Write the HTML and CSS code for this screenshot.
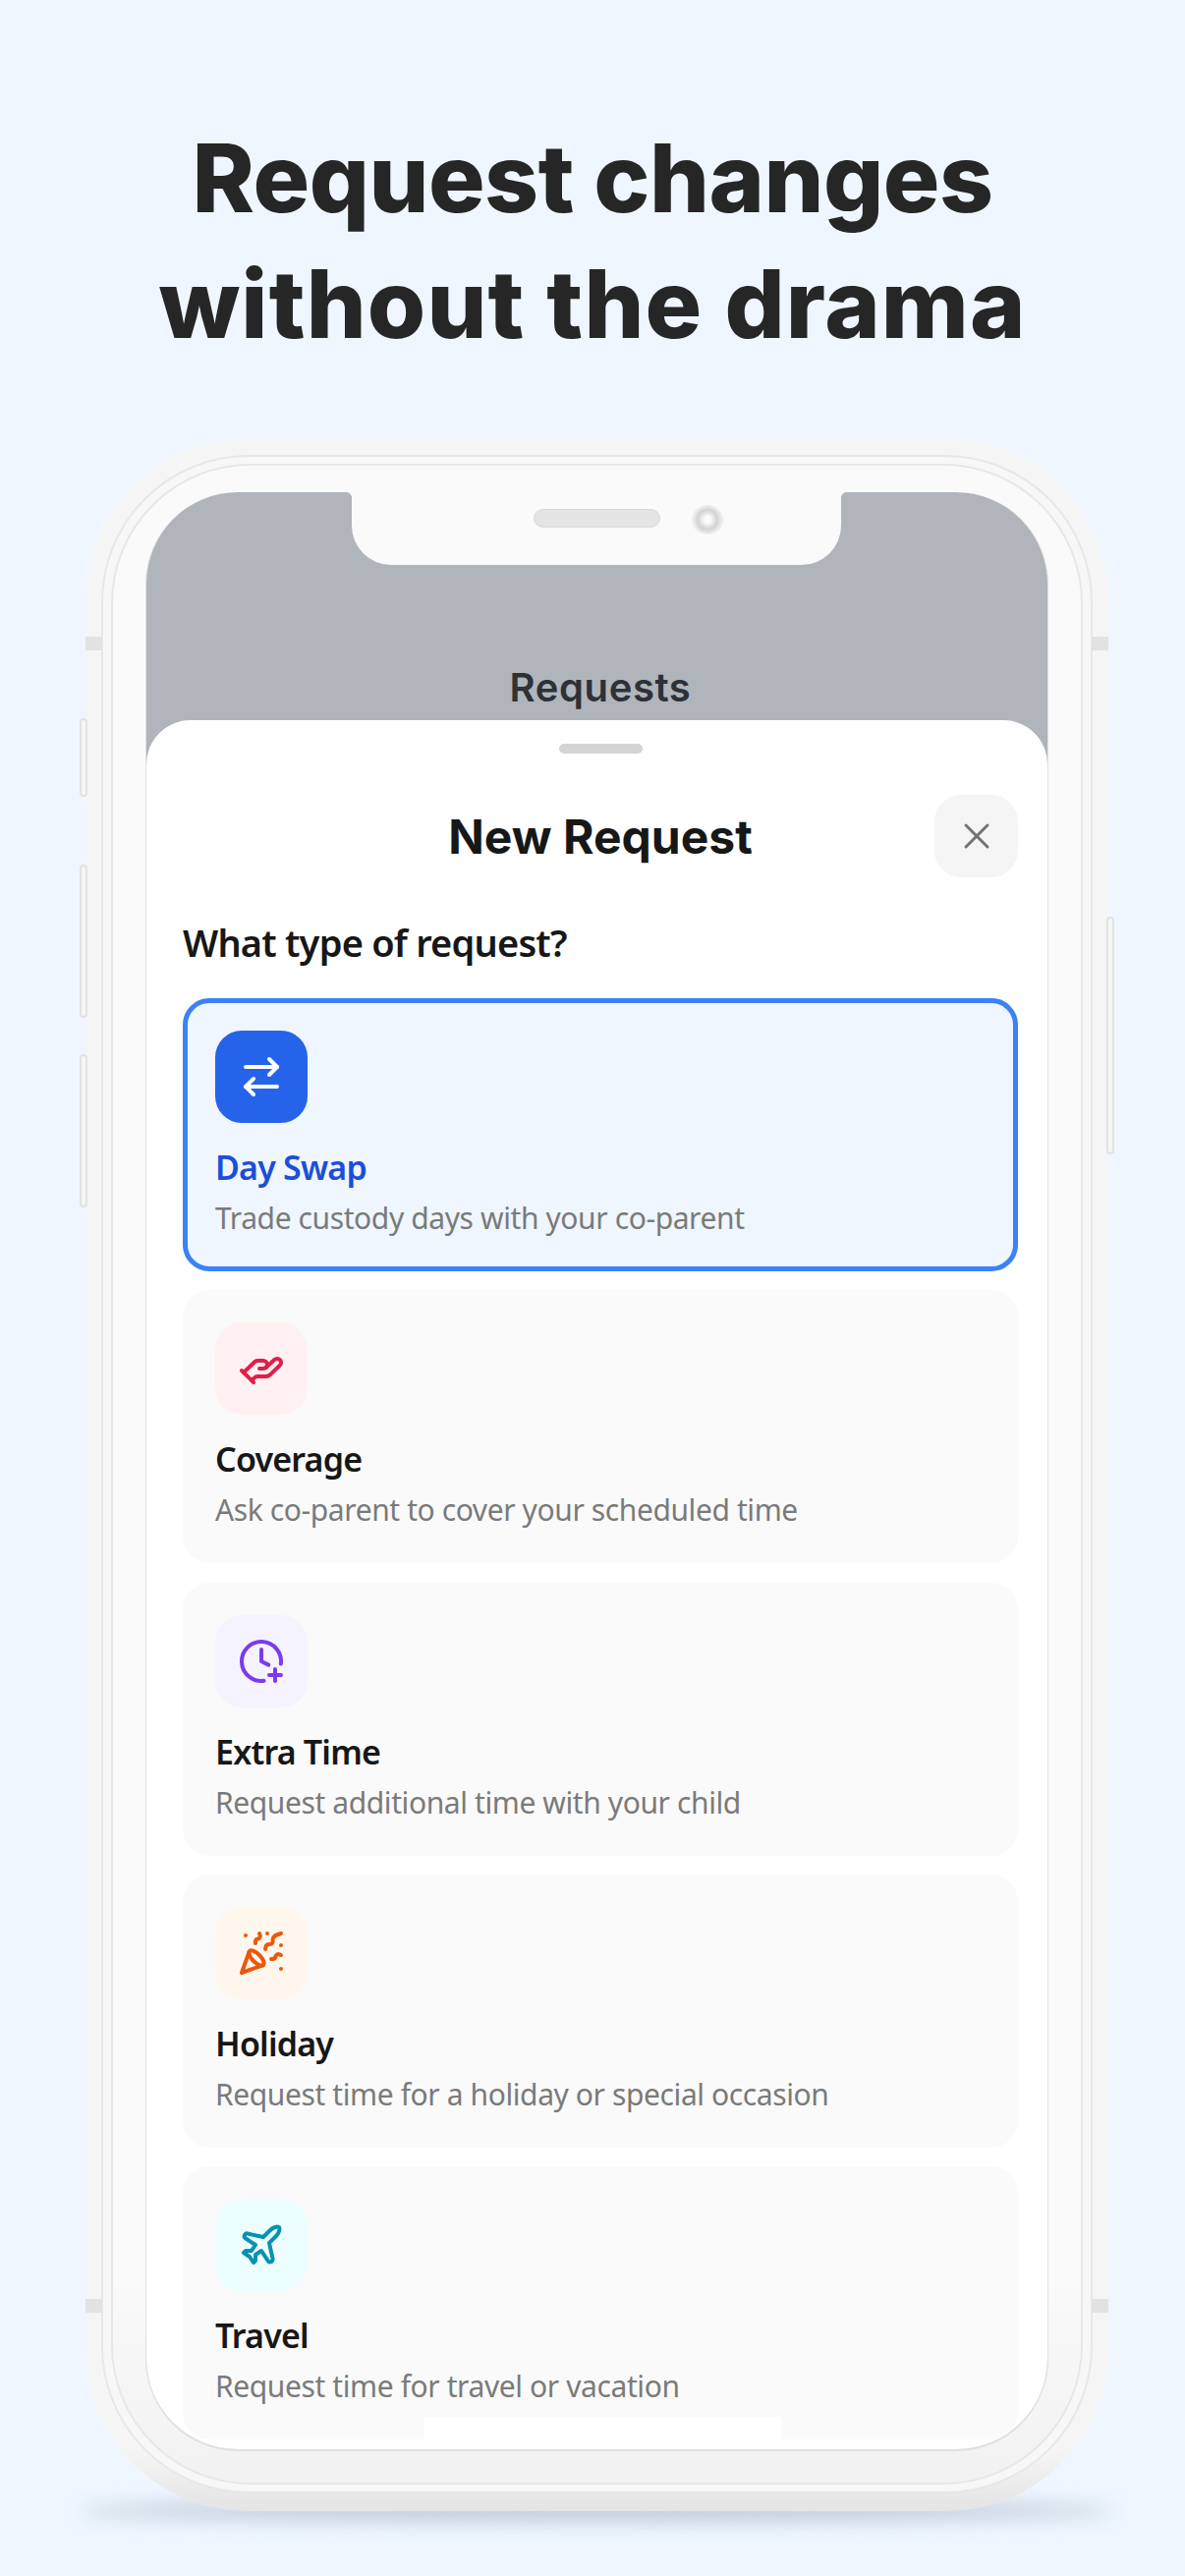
FILE: index.html
```html
<!DOCTYPE html>
<html lang="en">
<head>
    <meta charset="UTF-8">
    <meta name="viewport" content="width=device-width, initial-scale=1.0">
    <title>Request changes</title>
    <link rel="stylesheet" href="styles.css">
</head>
<body>
    <h1 class="headline">
        <span class="line-one">Request changes</span>
        <span class="line-two">without the drama</span>
    </h1>

    <div class="phone">
        <span class="side-btn mute"></span>
        <span class="side-btn vol-up"></span>
        <span class="side-btn vol-down"></span>
        <span class="side-btn power"></span>
        <span class="band band-tl"></span>
        <span class="band band-tr"></span>
        <span class="band band-bl"></span>
        <span class="band band-br"></span>

        <div class="ring-outer">
            <div class="ring-inner">
                <div class="screen">
                    <div class="notch">
                        <span class="speaker"></span>
                        <span class="camera"></span>
                    </div>

                    <div class="app-bar">Requests</div>

                    <div class="sheet">
                        <div class="handle"></div>
                        <div class="sheet-head">
                            <h2>New Request</h2>
                            <div class="close-btn">
                                <svg class="icon-x" viewBox="0 0 24 24"><path d="M18 6 6 18"/><path d="m6 6 12 12"/></svg>
                            </div>
                        </div>

                        <h3 class="question">What type of request?</h3>

                        <div class="option selected">
                            <div class="icon-box icon-blue">
                                <svg viewBox="0 0 24 24"><path d="m16 3 4 4-4 4"/><path d="M20 7H4"/><path d="m8 21-4-4 4-4"/><path d="M4 17h16"/></svg>
                            </div>
                            <div class="option-title">Day Swap</div>
                            <div class="option-desc">Trade custody days with your co-parent</div>
                        </div>

                        <div class="option">
                            <div class="icon-box icon-red">
                                <svg viewBox="0 0 24 24"><path d="M11 12h2a2 2 0 1 0 0-4h-3c-.6 0-1.1.2-1.4.6L3 14"/><path d="m7 18 1.6-1.4c.3-.4.8-.6 1.4-.6h4c1.1 0 2.1-.4 2.8-1.2l4.6-4.4a2 2 0 0 0-2.75-2.91l-4.2 3.9"/><path d="m2 13 6 6"/></svg>
                            </div>
                            <div class="option-title">Coverage</div>
                            <div class="option-desc">Ask co-parent to cover your scheduled time</div>
                        </div>

                        <div class="option">
                            <div class="icon-box icon-purple">
                                <svg viewBox="0 0 24 24"><path d="M12 6v6l3.644 1.822"/><path d="M16 19h6"/><path d="M19 16v6"/><path d="M21.92 13.267a10 10 0 1 0-8.653 8.653"/></svg>
                            </div>
                            <div class="option-title">Extra Time</div>
                            <div class="option-desc">Request additional time with your child</div>
                        </div>

                        <div class="option">
                            <div class="icon-box icon-orange">
                                <svg viewBox="0 0 24 24"><path d="M5.8 11.3 2 22l10.7-3.79"/><path d="M4 3h.01"/><path d="M22 8h.01"/><path d="M15 2h.01"/><path d="M22 20h.01"/><path d="m22 2-2.24.75a2.9 2.9 0 0 0-1.96 3.12c.1.86-.57 1.63-1.45 1.63h-.38c-.86 0-1.6.6-1.76 1.44L14 10"/><path d="m22 13-.82-.33c-.86-.34-1.82.2-1.98 1.11c-.11.7-.72 1.22-1.43 1.22H17"/><path d="m11 2 .33.82c.34.86-.2 1.82-1.11 1.98C9.52 4.9 9 5.52 9 6.23V7"/><path d="M11 13c1.93 1.93 2.83 4.17 2 5-.83.83-3.07-.07-5-2-1.93-1.93-2.83-4.17-2-5 .83-.83 3.07.07 5 2Z"/></svg>
                            </div>
                            <div class="option-title">Holiday</div>
                            <div class="option-desc">Request time for a holiday or special occasion</div>
                        </div>

                        <div class="option">
                            <div class="icon-box icon-cyan">
                                <svg viewBox="0 0 24 24"><path d="M17.8 19.2 16 11l3.5-3.5C21 6 21.5 4 21 3c-1-.5-3 0-4.5 1.5L13 8 4.8 6.2c-.5-.1-.9.1-1.1.5l-.3.5c-.2.5-.1 1 .3 1.3L9 12l-2 3H4l-1 1 3 2 2 3 1-1v-3l3-2 3.5 5.3c.3.4.8.5 1.3.3l.5-.2c.4-.3.6-.7.5-1.2z"/></svg>
                            </div>
                            <div class="option-title">Travel</div>
                            <div class="option-desc">Request time for travel or vacation</div>
                        </div>
                    </div>

                    <div class="home-patch"></div>
                </div>
            </div>
        </div>
    </div>
    <div class="phone-shadow"></div>
</body>
</html>
```

FILE: styles.css
```css
* {
    box-sizing: border-box;
}

html, body {
    height: 2622px;
    overflow: hidden;
}

body {
    margin: 0;
    background: #eff6ff;
    font-family: "Noto Sans", sans-serif;
    position: relative;
}

.headline {
    margin: 0;
    padding-top: 117px;
    height: 446px;
    text-align: center;
    font-family: Inter, sans-serif;
    font-size: 96px;
    line-height: 128px;
    font-weight: 800;
    color: #262626;
}

.line-one,
.line-two {
    display: block;
}

.line-one {
    letter-spacing: -0.5px;
}

.line-two {
    letter-spacing: 1.1px;
}

/* phone mockup */
.phone {
    position: relative;
    z-index: 1;
    width: 1041px;
    height: 2110px;
    margin-left: 87px;
    padding: 17px 16px 18px;
    border-radius: 165px;
    background: linear-gradient(to bottom, #f5f5f5 97%, #e4e4e4);
}

.ring-outer {
    height: 100%;
    padding: 7px 8px;
    border: 2px solid #e7e7e7;
    border-radius: 150px;
    background: #f7f7f7;
}

.ring-inner {
    height: 100%;
    padding: 27px 33px 33px;
    border: 2px solid #e7e7e7;
    border-radius: 142px;
    background: linear-gradient(to bottom, #fafafa 90%, #f1f1f1);
}

.screen {
    position: relative;
    height: 1994px;
    overflow: hidden;
    border-radius: 94px;
    border: solid #e0e0e0;
    border-width: 0 1px 2px;
    background: #b0b5bc;
}

.side-btn {
    position: absolute;
    left: -6px;
    width: 8px;
    border: 2px solid #e2e2e2;
    border-radius: 4px;
    background: #f6f6f6;
}

.mute { top: 285px; height: 80px; }
.vol-up { top: 434px; height: 156px; }
.vol-down { top: 627px; height: 156px; }
.power { top: 487px; left: auto; right: -6px; height: 242px; }

.band {
    position: absolute;
    width: 17px;
    height: 14px;
    background: #e2e2e2;
}

.band-tl { top: 202px; left: 0; }
.band-tr { top: 202px; right: 0; }
.band-bl { top: 1894px; left: 0; }
.band-br { top: 1894px; right: 0; }

.notch {
    position: absolute;
    top: 0;
    left: 209px;
    width: 498px;
    height: 74px;
    border-radius: 0 0 40px 40px;
    background: #fafafa;
}

/* little flares where the notch meets the top edge */
.notch::before,
.notch::after {
    content: "";
    position: absolute;
    top: 0;
    width: 5px;
    height: 5px;
}

.notch::before {
    left: -5px;
    background: radial-gradient(circle at 0 100%, transparent 4.5px, #fafafa 5px);
}

.notch::after {
    right: -5px;
    background: radial-gradient(circle at 100% 100%, transparent 4.5px, #fafafa 5px);
}

.speaker {
    position: absolute;
    top: 17px;
    left: 185px;
    width: 129px;
    height: 19px;
    border: 1px solid #d8d8d8;
    border-radius: 10px;
    background: #e4e4e4;
}

.camera {
    position: absolute;
    top: 13px;
    left: 346px;
    width: 32px;
    height: 30px;
    border-radius: 50%;
    background: radial-gradient(circle, #fafafa 0 15%, #d2d2d2 45%, #ececec 65%);
}

/* app behind the sheet */
.app-bar {
    height: 232px;
    padding-top: 173px;
    padding-left: 7px;
    text-align: center;
    font-family: Inter, sans-serif;
    font-size: 40px;
    line-height: 52px;
    font-weight: 600;
    letter-spacing: 0.6px;
    color: #2e3136;
}

.sheet {
    height: 1762px;
    padding: 24px 30px 0 37px;
    border-radius: 45px 45px 0 0;
    background: #fff;
}

.handle {
    width: 85px;
    height: 10px;
    margin: 0 auto 42px;
    border-radius: 5px;
    background: #d4d4d4;
}

.sheet-head {
    display: grid;
    grid-template-columns: 85px 1fr 85px;
    align-items: center;
    height: 84px;
}

.sheet-head h2 {
    grid-column: 2;
    margin: 0;
    text-align: center;
    font-family: Inter, sans-serif;
    font-size: 48px;
    font-weight: 700;
    color: #171717;
}

.close-btn {
    display: flex;
    align-items: center;
    justify-content: center;
    height: 84px;
    border-radius: 27px;
    background: #f5f5f5;
}

svg {
    width: 48px;
    height: 48px;
    fill: none;
    stroke: currentColor;
    stroke-width: 2;
    stroke-linecap: round;
    stroke-linejoin: round;
}

.close-btn .icon-x {
    width: 44px;
    height: 44px;
    stroke: #737373;
    stroke-width: 1.6;
}

.question {
    margin: 40px 0 31px;
    font-size: 38px;
    line-height: 52px;
    font-weight: 600;
    letter-spacing: -0.8px;
    color: #171717;
}

.option {
    height: 278px;
    margin-bottom: 19.33px;
    padding: 33px;
    border-radius: 27px;
    background: #fafafa;
}

.option.selected {
    padding: 28px;
    border: 5px solid #3b82f6;
    background: #eff6ff;
}

.icon-box {
    display: flex;
    align-items: center;
    justify-content: center;
    width: 94px;
    height: 94px;
    border-radius: 27px;
}

.icon-blue { background: #2563eb; color: #fff; }
.icon-red { background: #fff1f2; color: #e11d48; }
.icon-purple { background: #f5f3ff; color: #7c3aed; }
.icon-orange { background: #fff7ed; color: #ea580c; }
.icon-cyan { background: #ecfeff; color: #0891b2; }

.option-title {
    margin-top: 22px;
    font-size: 34px;
    line-height: 46px;
    font-weight: 600;
    letter-spacing: -0.8px;
    color: #171717;
}

.selected .option-title {
    color: #1d4ed8;
}

.option-desc {
    margin-top: 7px;
    font-size: 30px;
    line-height: 44px;
    letter-spacing: -0.4px;
    color: #7a7a7a;
}

.home-patch {
    position: absolute;
    left: 283px;
    bottom: 10px;
    width: 363px;
    height: 23px;
    background: #fff;
}

.phone-shadow {
    position: absolute;
    left: 80px;
    top: 2546px;
    width: 1055px;
    height: 20px;
    border-radius: 50%;
    background: #b9c4d4;
    filter: blur(10px);
}
```
